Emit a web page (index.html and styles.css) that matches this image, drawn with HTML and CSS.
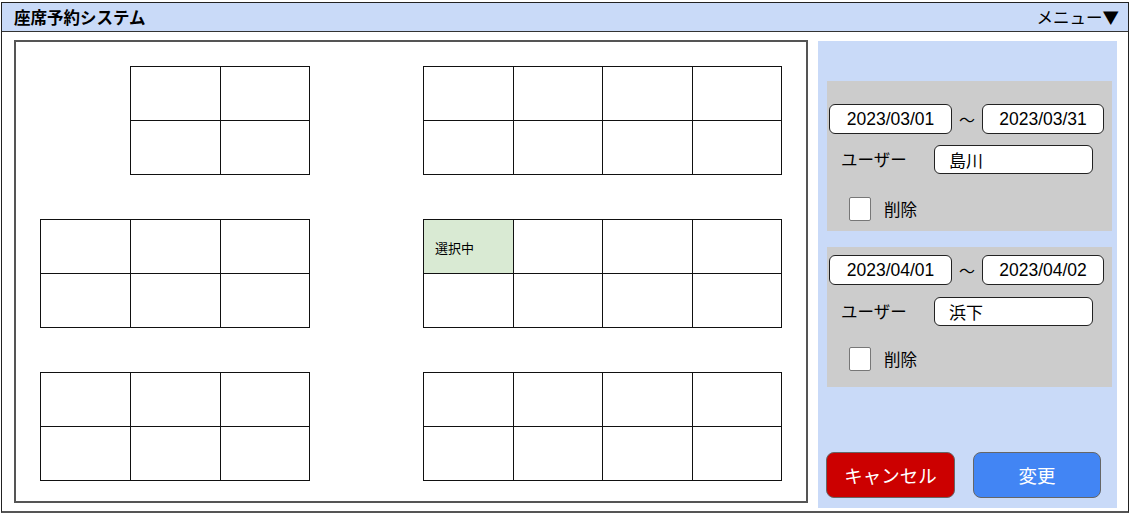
FILE: index.html
```html
<!DOCTYPE html>
<html lang="ja">
<head>
<meta charset="utf-8">
<title>座席予約システム</title>
<link rel="stylesheet" href="styles.css">
</head>
<body>
<div class="app">
  <header class="header">
    <div class="title">座席予約システム</div>
    <div class="menu">メニュー▼</div>
  </header>
  <div class="content">
    <div class="canvas">
      <div class="block c2">
        <div class="cell"></div><div class="cell"></div>
        <div class="cell"></div><div class="cell"></div>
      </div>
      <div class="block c4">
        <div class="cell"></div><div class="cell"></div><div class="cell"></div><div class="cell"></div>
        <div class="cell"></div><div class="cell"></div><div class="cell"></div><div class="cell"></div>
      </div>
      <div class="block c3">
        <div class="cell"></div><div class="cell"></div><div class="cell"></div>
        <div class="cell"></div><div class="cell"></div><div class="cell"></div>
      </div>
      <div class="block c4">
        <div class="cell selected">選択中</div><div class="cell"></div><div class="cell"></div><div class="cell"></div>
        <div class="cell"></div><div class="cell"></div><div class="cell"></div><div class="cell"></div>
      </div>
      <div class="block c3">
        <div class="cell"></div><div class="cell"></div><div class="cell"></div>
        <div class="cell"></div><div class="cell"></div><div class="cell"></div>
      </div>
      <div class="block c4">
        <div class="cell"></div><div class="cell"></div><div class="cell"></div><div class="cell"></div>
        <div class="cell"></div><div class="cell"></div><div class="cell"></div><div class="cell"></div>
      </div>
    </div>
    <aside class="panel">
      <div class="res res-first">
        <div class="date-row">
          <div class="date">2023/03/01</div>
          <div class="tilde">〜</div>
          <div class="date date-end">2023/03/31</div>
        </div>
        <div class="user-row">
          <div class="user-label">ユーザー</div>
          <div class="user-input">島川</div>
        </div>
        <div class="check-row">
          <div class="checkbox"></div>
          <div class="check-label">削除</div>
        </div>
      </div>
      <div class="res res-second">
        <div class="date-row">
          <div class="date">2023/04/01</div>
          <div class="tilde">〜</div>
          <div class="date date-end">2023/04/02</div>
        </div>
        <div class="user-row">
          <div class="user-label">ユーザー</div>
          <div class="user-input">浜下</div>
        </div>
        <div class="check-row">
          <div class="checkbox"></div>
          <div class="check-label">削除</div>
        </div>
      </div>
      <div class="buttons">
        <div class="btn btn-cancel">キャンセル</div>
        <div class="btn btn-change">変更</div>
      </div>
    </aside>
  </div>
</div>
</body>
</html>
```
FILE: styles.css
```css
* { box-sizing: border-box; }
html, body { margin: 0; padding: 0; background: #fff; }
body {
  font-family: "Noto Sans CJK JP", "Liberation Sans", sans-serif;
  color: #000;
}
.app {
  margin: 2px 0 0 1px;
  width: 1128px;
  height: 511px;
  border: 1px solid #222;
  border-bottom: 2px solid #555;
  display: flex;
  flex-direction: column;
}
.header {
  height: 29px;
  flex: none;
  background: #c9daf8;
  border-bottom: 1px solid #333;
  display: flex;
  align-items: center;
  justify-content: space-between;
  padding: 0 9px 0 12px;
}
.title {
  font-size: 16.5px;
  font-weight: bold;
  line-height: 1;
}
.menu {
  font-size: 16.5px;
  line-height: 1;
}
.content {
  display: flex;
  align-items: flex-start;
  padding: 8px 0 0 12px;
}
.canvas {
  width: 794px;
  height: 463px;
  border: 2px solid #555;
  display: grid;
  grid-template-columns: 294px 359px;
  column-gap: 113px;
  row-gap: 44px;
  align-content: start;
  padding-top: 24px;
}
.block {
  display: grid;
  gap: 1px;
  padding: 1px;
  background: #111;
  grid-template-rows: 53px 53px;
}
.c2 { grid-template-columns: 89px 88px; justify-self: end; }
.c3 { grid-template-columns: 89px 89px 88px; justify-self: end; }
.c4 { grid-template-columns: 89px 88px 89px 88px; }
.cell { background: #fff; }
.cell.selected {
  background: #d9ead3;
  font-size: 13px;
  display: flex;
  align-items: center;
  padding: 2px 0 0 11px;
}
.panel {
  margin: 1px 0 0 10px;
  width: 299px;
  height: 467px;
  background: #c9daf8;
  display: flex;
  flex-direction: column;
  padding: 40px 5px 10px 9px;
}
.res {
  background: #cccccc;
  padding-left: 2px;
}
.res-first { height: 150px; padding-top: 23px; }
.res-second { height: 140px; padding-top: 8px; margin-top: 16px; }
.date-row {
  display: flex;
  align-items: center;
}
.date {
  width: 123px;
  height: 30px;
  background: #fff;
  border: 1px solid #222;
  border-radius: 6px;
  font-family: "Liberation Sans", Arial, sans-serif;
  font-size: 17.5px;
  text-align: center;
  line-height: 28px;
}
.date-end { width: 122px; }
.tilde {
  width: 30px;
  text-align: center;
  font-size: 16px;
  line-height: 1;
}
.user-row {
  display: flex;
  align-items: center;
  margin-top: 11px;
}
.res-second .user-row { margin-top: 12px; }
.user-label {
  width: 105px;
  padding-left: 12px;
  font-size: 16.5px;
  line-height: 1;
}
.user-input {
  width: 159px;
  height: 29px;
  background: #fff;
  border: 1px solid #222;
  border-radius: 6px;
  font-size: 17px;
  line-height: 27px;
  padding-left: 14px;
}
.check-row {
  display: flex;
  align-items: center;
  margin-top: 23px;
  padding-left: 20px;
}
.res-second .check-row { margin-top: 21px; }
.checkbox {
  width: 22px;
  height: 24px;
  background: #fff;
  border: 1px solid #777;
  border-radius: 2px;
}
.check-label {
  margin-left: 13px;
  font-size: 16.5px;
  line-height: 1;
}
.buttons {
  margin-top: auto;
  display: flex;
  gap: 18px;
  margin-left: -1px;
}
.btn {
  width: 129px;
  height: 46px;
  border: 1px solid #666;
  border-radius: 8px;
  color: #fff;
  display: flex;
  align-items: center;
  justify-content: center;
  font-size: 18.5px;
  line-height: 1;
}
.btn-cancel { background: #cc0000; }
.btn-change { background: #4285f4; width: 128px; }
```
